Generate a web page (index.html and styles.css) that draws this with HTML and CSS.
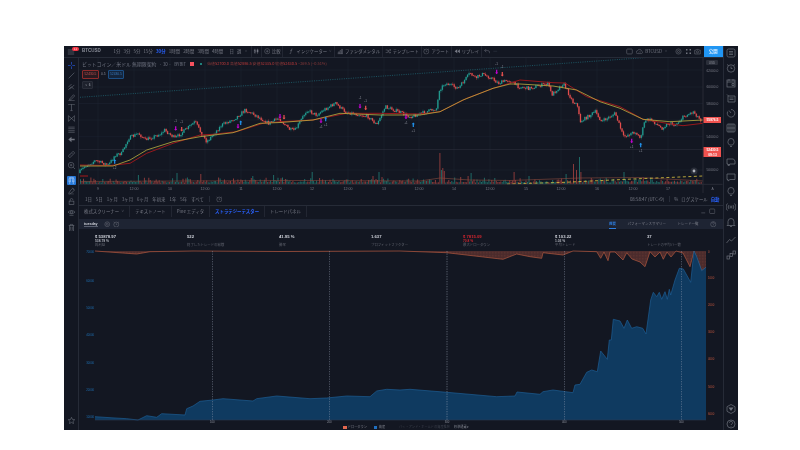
FILE: index.html
```html
<!DOCTYPE html>
<html lang="ja">
<head>
<meta charset="utf-8">
<title>BTCUSD</title>
<link rel="stylesheet" href="styles.css">
</head>
<body>
<svg class="sprite" aria-hidden="true">
  <symbol id="i-menu" viewBox="0 0 10 10"><path d="M1 2.5h8M1 5h8M1 7.500h8"/></symbol>
  <symbol id="i-cross" viewBox="0 0 10 10"><path d="M5 .5v3.500M5 6v3.500M.5 5H4M6 5h3.500"/></symbol>
  <symbol id="i-line" viewBox="0 0 10 10"><path d="M1.500 8.500l7-7"/></symbol>
  <symbol id="i-fork" viewBox="0 0 10 10"><path d="M1 6l4-4M3 8.500l5.500-5.500M1 9l4-4M5 5.500l3 3"/></symbol>
  <symbol id="i-brush" viewBox="0 0 10 10"><path d="M1 9h8M2.500 7l5-5.500 1.500 1.500-5 5H2.500z"/></symbol>
  <symbol id="i-text" viewBox="0 0 10 10"><path d="M1.500 2V1h7v1M5 1v8M3.500 9h3"/></symbol>
  <symbol id="i-pattern" viewBox="0 0 10 10"><path d="M1 1.500l8 7M1 8.500l8-7M1 1.500v7M9 1.500v7"/></symbol>
  <symbol id="i-bars" viewBox="0 0 10 10"><path d="M1 2h8M1 4h8M1 6.500h8M1 8.500h8"/></symbol>
  <symbol id="i-back" viewBox="0 0 10 10"><path class="solid" d="M1 5l4-3.500V4h4v2H5v2.500z"/></symbol>
  <symbol id="i-ruler" viewBox="0 0 10 10"><path d="M1 7l6-6 2 2-6 6zM3 5l1 1M5 3l1 1"/></symbol>
  <symbol id="i-zoom" viewBox="0 0 10 10"><circle cx="4.500" cy="4.500" r="3.500"/><path d="M7 7l2.500 2.500M3 4.500h3M4.500 3v3"/></symbol>
  <symbol id="i-magnet" viewBox="0 0 10 10"><path d="M2 3.500a3 3 0 0 1 6 0V7H6.500V3.500a1.500 1.500 0 0 0-3 0V7H2zM2 8.500h1.500M6.500 8.500H8"/></symbol>
  <symbol id="i-pen" viewBox="0 0 10 10"><path d="M1.500 8.500l3-4.500 2-1.500 2 2-1.500 2-4.500 3zM6 1.500l2.500 2.500M1 9.500h7"/></symbol>
  <symbol id="i-lock" viewBox="0 0 10 10"><rect x="2" y="4.500" width="6" height="4.500"/><path d="M3.300 4.500V3a1.700 1.700 0 0 1 3.400 0"/></symbol>
  <symbol id="i-eye" viewBox="0 0 10 10"><path d="M.5 4.500Q5 .5 9.500 4.500 5 8.500.5 4.500z"/><circle cx="5" cy="4.500" r="1.400"/><path d="M2.500 8.500h5"/></symbol>
  <symbol id="i-trash" viewBox="0 0 10 10"><path d="M1.500 2.500h7M3.500 2.500V1h3v1.500M2.500 2.500V9.500h5V2.500M4 4v4M6 4v4"/></symbol>
  <symbol id="i-star" viewBox="0 0 10 10"><path d="M5 1l1.200 2.700 2.900.3-2.200 2 .6 2.900L5 7.400 2.500 8.900l.6-2.900-2.200-2 2.900-.3z"/></symbol>
  <symbol id="i-list" viewBox="0 0 10 10"><rect x="1" y="1" width="8" height="8" rx="1.500"/><path d="M3 3.500h4M3 5h4M3 6.500h4"/></symbol>
  <symbol id="i-clock" viewBox="0 0 10 10"><circle cx="5" cy="5.500" r="3.700"/><path d="M5 3.500v2h1.500M1 1.500l1.500 1M9 1.500l-1.500 1"/></symbol>
  <symbol id="i-cal" viewBox="0 0 10 10"><rect x="1" y="2" width="8" height="7"/><path d="M1 4h8M3 1v2M7 1v2M6 5.500h2v2H6z"/></symbol>
  <symbol id="i-box" viewBox="0 0 10 10"><path d="M1 1.500l1.500 1.500M2 3h7v6H2zM3.500 5h4M3.500 6.500h4"/></symbol>
  <symbol id="i-timer" viewBox="0 0 10 10"><path d="M5 1.500a3.800 3.800 0 1 1-3.300 2M5 5L3 2.500"/></symbol>
  <symbol id="i-grid" viewBox="0 0 10 10"><rect x="1" y="1" width="8" height="8" rx="1"/><path d="M5 1v8M1 5h8M3 1v8M7 1v8"/></symbol>
  <symbol id="i-bulb" viewBox="0 0 10 10"><path d="M3.500 7C2 5.500 1.800 4.500 2 3.500a3 3 0 0 1 6 0C8.200 4.500 8 5.500 6.500 7zM4 8.500h2"/></symbol>
  <symbol id="i-chat" viewBox="0 0 10 10"><path d="M1 2h6.500l1.500 2v3H4L2 8.500V7H1z"/><circle cx="3" cy="8" r=".6"/></symbol>
  <symbol id="i-bubble" viewBox="0 0 10 10"><path d="M1 2h8v5.500H4L2 9V7.500H1z"/></symbol>
  <symbol id="i-wave" viewBox="0 0 10 10"><circle cx="5" cy="5" r="1"/><path d="M3 3a3 3 0 0 0 0 4M7 3a3 3 0 0 1 0 4M1.500 1.500a5 5 0 0 0 0 7M8.500 1.500a5 5 0 0 1 0 7"/></symbol>
  <symbol id="i-bell" viewBox="0 0 10 10"><path d="M2 7.500V4.500a3 3 0 0 1 6 0v3l1 1H1zM4 9.500h2"/></symbol>
  <symbol id="i-trend" viewBox="0 0 10 10"><path d="M.5 8l3-3.500 2 1.500 4-4"/></symbol>
  <symbol id="i-steps" viewBox="0 0 10 10"><rect x="1" y="6" width="2.500" height="3"/><rect x="4" y="3.500" width="2.500" height="3"/><rect x="7" y="1" width="2.500" height="3"/></symbol>
  <symbol id="i-hex" viewBox="0 0 10 10"><path d="M5 .5l4 2.200v4.600L5 9.500 1 7.300V2.700z"/><path class="solid" d="M2.500 3.500h5L5 7z"/></symbol>
  <symbol id="i-help" viewBox="0 0 10 10"><circle cx="5" cy="5" r="4"/><path d="M3.500 3.800a1.500 1.500 0 1 1 2 1.400L5 6M5 7v.6"/></symbol>
  <symbol id="i-candle" viewBox="0 0 10 10"><path d="M3 1v8M7 1v8"/><rect x="1.800" y="3" width="2.400" height="4"/><rect class="solid" x="5.800" y="2.500" width="2.400" height="4"/></symbol>
  <symbol id="i-plus" viewBox="0 0 10 10"><circle cx="5" cy="5" r="4"/><path d="M5 3v4M3 5h4"/></symbol>
  <symbol id="i-ind" viewBox="0 0 10 10"><path d="M7 1.500H5.500L4 8.500H2.500M3.300 4h3"/></symbol>
  <symbol id="i-fund" viewBox="0 0 10 10"><path d="M1 9h8M2 9V6h1.500v3M4.500 9V4H6v5M7 9V2h1.500v7"/></symbol>
  <symbol id="i-tmpl" viewBox="0 0 10 10"><path d="M1 3h3l2 4h3M1 7h3l2-4h3M7.500 1.500L9 3 7.500 4.500M7.500 5.500L9 7 7.500 8.500"/></symbol>
  <symbol id="i-alert" viewBox="0 0 10 10"><circle cx="5" cy="5.500" r="3.800"/><path d="M5 3.500v2h1.500M1 1.500l1.500 1M9 1.500l-1.500 1"/></symbol>
  <symbol id="i-replay" viewBox="0 0 10 10"><path class="solid" d="M5 2v6L1 5zM9 2v6L5.500 5z"/></symbol>
  <symbol id="i-undo" viewBox="0 0 10 10"><path d="M3.500 1.500L1 4l2.500 2.500M1 4h5a2.500 2.500 0 0 1 2.500 2.500V8"/></symbol>
  <symbol id="i-redo" viewBox="0 0 10 10"><path d="M2 5h6"/></symbol>
  <symbol id="i-square" viewBox="0 0 10 10"><rect x="1" y="1.500" width="8" height="7" rx="1.200"/></symbol>
  <symbol id="i-cloud" viewBox="0 0 10 10"><path d="M2.500 8a2 2 0 0 1-.3-4A3 3 0 0 1 8 4.500 1.800 1.800 0 0 1 7.800 8zM4 6.500l1.500-1.500 1 1"/></symbol>
  <symbol id="i-gear" viewBox="0 0 10 10"><circle cx="5" cy="5" r="1.500"/><circle cx="5" cy="5" r="3.700"/></symbol>
  <symbol id="i-full" viewBox="0 0 10 10"><path class="solid" d="M1.500 1.500h2v2h-2zM6.500 1.500h2v2h-2zM1.500 6.500h2v2h-2zM6.500 6.500h2v2h-2z"/></symbol>
  <symbol id="i-cam" viewBox="0 0 10 10"><path d="M1 3h2l.8-1h2.400l.8 1h2v5.500H1z"/><circle cx="5" cy="5.500" r="1.500"/></symbol>
  <symbol id="i-min" viewBox="0 0 10 10"><path d="M2 7.500h6"/></symbol>
</svg>

<div class="app">
  <div class="main">
    <header class="topbar">
      <div class="tb-seg tb-menu"><svg class="ico"><use href="#i-menu"/></svg><span class="badge">11</span></div>
      <div class="tb-seg tb-symbol">BTCUSD</div>
      <div class="tb-seg tb-frames">
        <span>1分</span><span>3分</span><span>5分</span><span>15分</span><span class="on">30分</span><span>1時間</span><span>2時間</span><span>3時間</span><span>4時間</span><span class="wide">日</span><span>週</span><span class="caret">∨</span>
      </div>
      <div class="tb-seg tb-ico"><svg class="ico"><use href="#i-candle"/></svg></div>
      <div class="tb-seg"><svg class="ico"><use href="#i-plus"/></svg><span>比較</span></div>
      <div class="tb-seg tb-wide"><svg class="ico"><use href="#i-ind"/></svg><span>インジケーター</span><span class="caret">∨</span></div>
      <div class="tb-seg"><svg class="ico"><use href="#i-fund"/></svg><span>ファンダメンタル</span></div>
      <div class="tb-seg"><svg class="ico"><use href="#i-tmpl"/></svg><span>テンプレート</span></div>
      <div class="tb-seg"><svg class="ico"><use href="#i-alert"/></svg><span>アラート</span></div>
      <div class="tb-seg"><svg class="ico"><use href="#i-replay"/></svg><span>リプレイ</span></div>
      <div class="tb-seg tb-last"><svg class="ico"><use href="#i-undo"/></svg><svg class="ico dim"><use href="#i-redo"/></svg></div>
      <div class="tb-right">
        <svg class="ico"><use href="#i-square"/></svg>
        <svg class="ico"><use href="#i-cloud"/></svg>
        <span>BTCUSD</span><span class="caret">∨</span>
        <svg class="ico gap-l"><use href="#i-gear"/></svg>
        <svg class="ico"><use href="#i-full"/></svg>
        <svg class="ico"><use href="#i-cam"/></svg>
      </div>
      <button class="publish">公開</button>
    </header>

    <div class="body">
      <aside class="left">
        <svg class="tool cross"><use href="#i-cross"/></svg>
        <svg class="tool"><use href="#i-line"/></svg>
        <svg class="tool"><use href="#i-fork"/></svg>
        <svg class="tool"><use href="#i-brush"/></svg>
        <svg class="tool"><use href="#i-text"/></svg>
        <svg class="tool"><use href="#i-pattern"/></svg>
        <svg class="tool"><use href="#i-bars"/></svg>
        <svg class="tool"><use href="#i-back"/></svg>
        <svg class="tool brk"><use href="#i-ruler"/></svg>
        <svg class="tool"><use href="#i-zoom"/></svg>
        <svg class="tool brk active"><use href="#i-magnet"/></svg>
        <svg class="tool"><use href="#i-pen"/></svg>
        <svg class="tool"><use href="#i-lock"/></svg>
        <svg class="tool"><use href="#i-eye"/></svg>
        <svg class="tool brk"><use href="#i-trash"/></svg>
        <svg class="tool tool-end"><use href="#i-star"/></svg>
      </aside>

      <div class="center">
        <section class="chart-pane">
          <svg class="price-svg" viewBox="79 58 643.500 135" id="priceChart">
            <g id="grid" class="grid"></g>
            <line class="pane-sep" x1="79" x2="703" y1="149.500" y2="149.500"/>
            <polyline class="trend" points="80,97.300 650,57.300"/>
            <g id="volume"></g>
            <path class="vol-ma" d="M80 181.500L180 181 300 180.500 420 181 440 178 470 180 510 180.500 580 178 640 177.500 703 181"/>
            <polyline class="vol-dash" points="507,184 560,182.500 633,179 703,176"/>
            <path class="ma-stub" d="M80 176h8"/>
            <g id="candles"></g>
            <polyline class="ma-red" points="80,165 110,165.500 130,163.300 146.700,153.300 173,143.300 200,135 213,134.300 236.700,131.700 263,123.300 280,121.700 313,120 346.700,113.300 380,113.300 420,114 440,111.700 466.700,98.300 493.300,88.300 520,80 553,82.700 565,83 586.700,96.700 620,106.700 643,119.300 666.700,123.300 683,125.700 703,123.300"/>
            <polyline class="ma-yel" points="80,166 113,166 130,160 146.700,150 173,141.700 200,136.700 233,132.700 260,123.300 280,122.500 313,120 340,113.300 380,115 420,115 440,111.700 463,100 493,88.300 510,84 520,84 553,86 576.700,90 600,101.700 620,108.300 643,119.300 670,121.700 703,120"/>
            <g id="markers"></g>
            <circle class="cam-bg" cx="694" cy="171" r="3.500"/>
            <circle class="cam-dot" cx="694" cy="171" r="1.400"/>
            <line class="axis" x1="79" x2="722.500" y1="184.300" y2="184.300"/>
            <line class="axis" x1="703" x2="703" y1="58" y2="193"/>
            <g id="timeLabels" class="time-labels"></g>
            <g class="price-labels">
              <rect class="usd-box" x="706" y="60" width="12" height="5" rx="1"/>
              <text class="usd" x="712" y="63.700">USD</text>
              <text x="712.500" y="71.500">62000.0</text>
              <text x="712.500" y="88.200">60000.0</text>
              <text x="712.500" y="104.500">58000.0</text>
              <text x="712.500" y="137.800">54000.0</text>
              <text x="712.500" y="171.200">50000.0</text>
              <rect class="last-box" x="703.500" y="117" width="17.500" height="6"/>
              <text class="last" x="712.500" y="121.300">55876.5</text>
              <rect class="last-box" x="703.500" y="147" width="17.500" height="10"/>
              <text class="last" x="712.500" y="151">52430.5</text>
              <text class="last" x="712.500" y="155.500">09:13</text>
              <text class="auto" x="712.500" y="189.500">A</text>
            </g>
          </svg>
          <div class="legend">
            <div class="legend-title">
              <span class="name">ビットコイン／米ドル 無期限契約</span><span>· 30 ·</span><span>BYBIT</span><i class="flag"></i><i class="dot"></i>
              <span class="ohlc">始値<b>52700.0</b> 高値<b>52886.5</b> 安値<b>52335.0</b> 終値<b>52430.5</b> −269.5 (−0.51%)</span>
            </div>
            <div class="legend-trade"><span class="sell">52430.5</span><span class="spread">0.5</span><span class="buy">52430.5</span></div>
            <div class="legend-more">∨ 6</div>
          </div>
        </section>

        <div class="range">
          <span>1日</span><span>5日</span><span>1ヶ月</span><span>3ヶ月</span><span>6ヶ月</span><span>年初来</span><span>1年</span><span>5年</span><span>すべて</span>
          <i class="vbar"></i><svg class="ico"><use href="#i-alert"/></svg>
          <div class="range-right"><span>08:58:47 (UTC+9)</span><i class="vbar"></i><span>%</span><span>ログスケール</span><span class="on">自動</span></div>
        </div>

        <nav class="tabs">
          <span class="tab">株式スクリーナー<em>∨</em></span>
          <span class="tab">テキストノート</span>
          <span class="tab">Pine エディタ</span>
          <span class="tab on">ストラテジーテスター</span>
          <span class="tab">トレードパネル</span>
          <div class="tabs-right"><svg class="ico"><use href="#i-min"/></svg><svg class="ico"><use href="#i-square"/></svg></div>
        </nav>

        <div class="strategy">
          <span class="strat-name">tuesday</span>
          <svg class="ico"><use href="#i-gear"/></svg>
          <svg class="ico"><use href="#i-alert"/></svg>
          <div class="strat-right"><span class="on">概要</span><span>パフォーマンスサマリー</span><span>トレード一覧</span><svg class="ico"><use href="#i-help"/></svg></div>
        </div>

        <div class="stats">
          <div class="stat"><b>$ 53878.97</b><small>538.79 %</small><span>純利益</span></div>
          <div class="stat"><b>522</b><small></small><span>終了したトレードの総数</span></div>
          <div class="stat"><b>41.95 %</b><small></small><span>勝率</span></div>
          <div class="stat"><b>1.637</b><small></small><span>プロフィットファクター</span></div>
          <div class="stat neg"><b>$ 7815.09</b><small>70.8 %</small><span>最大ドローダウン</span></div>
          <div class="stat"><b>$ 103.22</b><small>1.03 %</small><span>平均トレード</span></div>
          <div class="stat"><b>37</b><small></small><span>トレードの平均バー数</span></div>
        </div>

        <svg class="equity-svg" viewBox="79 250 643.500 174">
          <defs>
            <pattern id="hatch" width="1.500" height="1.500" patternUnits="userSpaceOnUse"><rect width="1.500" height="1.500" fill="#4a2b2c"/><rect width=".6" height=".6" fill="#6a3a34"/></pattern>
          </defs>
          <path class="dd-fill" d="M95 251L136.700 254 150 251.700 193 251 280 251.500 400 251 446.700 252.700 503 259.300 516.700 254 530 256.700 541.700 258.300 543 252.700 563 255 573 251 596.700 251.700 600.700 258.300 604 252 608 260.700 610 252 615 252 623 260 626.700 252.700 632 259 640 262 645 266.700 650 251.700 655 257 660 252 663.300 259.300 667 252 671 257 676 251 683 253 690 266.700 694 251 701.700 270.700 706 267.300V251z"/>
          <path class="dd-line" d="M95 251L136.700 254 150 251.700 193 251 280 251.500 400 251 446.700 252.700 503 259.300 516.700 254 530 256.700 541.700 258.300 543 252.700 563 255 573 251 596.700 251.700 600.700 258.300 604 252 608 260.700 610 252 615 252 623 260 626.700 252.700 632 259 640 262 645 266.700 650 251.700 655 257 660 252 663.300 259.300 667 252 671 257 676 251 683 253 690 266.700 694 251 701.700 270.700 706 267.300"/>
          <path class="eq-fill" d="M95 416.700L110 417.700 126.700 418.700 138 420 146.700 415.700 156.700 417.300 161.700 413.700 185 415 186.700 408.700 193 406 200 401.300 213 400 223 398.700 253 401 256.700 398.700 276.700 396 293 397.300 310 398.700 326.700 398 346.700 396 370 396.700 376.700 391 386.700 389.300 400 390 410 389.300 446.700 392.300 496.700 396.700 515 396 517 392 540 394.300 543 391.700 553 390 573 392.700 575 385 580 384.300 586.700 372.300 591.700 370 597.300 371.700 600.700 351 607.300 359.300 609.300 340 611.300 340 613.300 319.300 620 321 624 328.300 627.300 320 631.700 328.300 636.700 326.700 642.700 328.300 646 334 650.700 300 653.300 292.300 656.700 296.700 659.300 292.300 661.700 299.300 665 291.700 667.300 299.300 669.300 289.300 670.700 295 675 280 679.300 268.300 683.300 269 690.700 282.300 694 251 696.700 256.700 701.700 270.700 706 267.300V420H95z"/>
          <path class="eq-line" d="M95 416.700L110 417.700 126.700 418.700 138 420 146.700 415.700 156.700 417.300 161.700 413.700 185 415 186.700 408.700 193 406 200 401.300 213 400 223 398.700 253 401 256.700 398.700 276.700 396 293 397.300 310 398.700 326.700 398 346.700 396 370 396.700 376.700 391 386.700 389.300 400 390 410 389.300 446.700 392.300 496.700 396.700 515 396 517 392 540 394.300 543 391.700 553 390 573 392.700 575 385 580 384.300 586.700 372.300 591.700 370 597.300 371.700 600.700 351 607.300 359.300 609.300 340 611.300 340 613.300 319.300 620 321 624 328.300 627.300 320 631.700 328.300 636.700 326.700 642.700 328.300 646 334 650.700 300 653.300 292.300 656.700 296.700 659.300 292.300 661.700 299.300 665 291.700 667.300 299.300 669.300 289.300 670.700 295 675 280 679.300 268.300 683.300 269 690.700 282.300 694 251 696.700 256.700 701.700 270.700 706 267.300"/>
          <line class="eq-base" x1="95" x2="706" y1="420" y2="420"/>
          <g class="eq-v">
            <line x1="212.300" x2="212.300" y1="251" y2="420"/>
            <line x1="329.300" x2="329.300" y1="251" y2="420"/>
            <line x1="447" x2="447" y1="251" y2="420"/>
            <line x1="564.300" x2="564.300" y1="251" y2="420"/>
            <line x1="681.300" x2="681.300" y1="251" y2="420"/>
          </g>
          <g class="eq-x">
            <text x="212.300" y="423.200">100</text><text x="329.300" y="423.200">200</text><text x="447" y="423.200">300</text><text x="564.300" y="423.200">400</text><text x="681.300" y="423.200">500</text>
          </g>
          <g class="eq-left">
            <text x="94" y="253">70000</text><text x="94" y="282">60000</text><text x="94" y="309">50000</text><text x="94" y="336">40000</text><text x="94" y="363.700">30000</text><text x="94" y="390.700">20000</text><text x="94" y="417.700">10000</text>
          </g>
          <g class="eq-right">
            <text x="708" y="253">0</text><text x="708" y="279">1000</text><text x="708" y="306">2000</text><text x="708" y="333">3000</text><text x="708" y="360">4000</text><text x="708" y="388">5000</text><text x="708" y="415">6000</text>
          </g>
        </svg>

        <div class="eq-legend">
          <i class="sw sw-dd"></i><span>ドローダウン</span>
          <i class="sw sw-eq"></i><span>資産</span>
          <span class="faint">バイ・アンド・ホールドの資産推移</span>
          <span class="unit">標準通貨 ▾</span>
        </div>
      </div>
    </div>
  </div>

  <aside class="right">
    <svg class="rtool"><use href="#i-list"/></svg>
    <svg class="rtool"><use href="#i-clock"/></svg>
    <svg class="rtool"><use href="#i-cal"/></svg>
    <svg class="rtool"><use href="#i-box"/></svg>
    <svg class="rtool"><use href="#i-timer"/></svg>
    <svg class="rtool"><use href="#i-grid"/></svg>
    <svg class="rtool"><use href="#i-bulb"/></svg>
    <svg class="rtool rbrk"><use href="#i-chat"/></svg>
    <svg class="rtool"><use href="#i-bubble"/></svg>
    <svg class="rtool"><use href="#i-bulb"/></svg>
    <svg class="rtool"><use href="#i-wave"/></svg>
    <svg class="rtool"><use href="#i-bell"/></svg>
    <svg class="rtool rbrk2"><use href="#i-trend"/></svg>
    <svg class="rtool"><use href="#i-steps"/></svg>
    <svg class="rtool rend"><use href="#i-hex"/></svg>
    <svg class="rtool"><use href="#i-help"/></svg>
  </aside>
</div>
<script src="chart.js"></script>
</body>
</html>
```
FILE: styles.css
```css
* { box-sizing: border-box; }
html, body { margin: 0; padding: 0; background: #fff; }
body { width: 800px; height: 450px; overflow: hidden; padding: 46px 0 0 64px; font-family: "Noto Sans CJK JP", "Noto Sans", sans-serif; }
.sprite { display: none; }
.sprite path, .sprite circle, .sprite rect { fill: none; stroke: currentColor; stroke-width: .7; }
.sprite .solid { fill: currentColor; stroke: none; }

.app { width: 674px; height: 384px; display: flex; background: #131722; color: #787b86; font-size: 4.4px; line-height: 1; filter: blur(.3px); overflow: hidden; }
.main { flex: 1; min-width: 0; display: flex; flex-direction: column; }
.ico { width: 6.5px; height: 6.5px; flex: none; color: #787b86; display: block; }
.ico.dim { color: #3a3f4d; }

/* top bar */
.topbar { height: 12px; flex: none; display: flex; align-items: center; border-bottom: 1px solid #262b37; position: relative; }
.tb-seg { height: 100%; display: flex; align-items: center; gap: 1.500px; padding: 0 1.800px; border-right: 1px solid #222632; white-space: nowrap; }
.tb-wide { padding: 0 2.500px 0 5px; }
.tb-menu { width: 14.500px; padding: 0 0 0 2.500px; position: relative; border-right: 0; }
.tb-menu .ico { width: 8px; height: 8px; }
.badge { position: absolute; left: 8px; top: .5px; width: 7px; height: 4.500px; border-radius: 2.500px; background: #f23645; color: #fff; font-size: 2.500px; text-align: center; line-height: 4.500px; }
.tb-symbol { width: 33.500px; padding: 0 0 0 3.500px; color: #8a8e99; font-family: "Liberation Sans", sans-serif; font-weight: 700; font-size: 4.500px; border-right: 0; }
.tb-frames { gap: 3.200px; padding: 0 3px 0 1.500px; }
.tb-frames .on { color: #2962ff; font-weight: 700; }
.tb-frames .wide { margin-left: 3px; }
.caret { font-size: 3px; color: #5d606b; }
.tb-ico { padding: 0 1.500px; }
.tb-last { border-right: 0; }
.tb-right { margin-left: auto; display: flex; align-items: center; gap: 2.500px; padding-right: 3px; white-space: nowrap; }
.tb-right .ico { width: 7px; height: 7px; }
.gap-l { margin-left: 5px; }
.publish { width: 18.500px; height: 12px; margin: -1px 0 0 0; flex: none; border: 0; padding: 0; background: #2196f3; color: #dceeff; font: 700 4.400px "Noto Sans CJK JP", sans-serif; align-self: flex-start; }

/* left tools */
.body { flex: 1; min-height: 0; display: flex; }
.left { width: 15px; flex: none; display: flex; flex-direction: column; align-items: center; gap: 1.700px; padding: 2.500px 0 5.500px; border-right: 1px solid #262b37; }
.tool { width: 9px; height: 9px; flex: none; color: #70747f; padding: .5px; }
.tool.cross { color: #2962ff; }
.brk { margin-top: 4.200px; }
.tool.active { color: #d8e9ff; background: #2678d8; border-radius: 1px; }
.tool-end { margin-top: auto; }

.center { flex: 1; min-width: 0; display: flex; flex-direction: column; position: relative; }

/* price chart */
.chart-pane { height: 135px; flex: none; position: relative; }
.price-svg { display: block; width: 643.500px; height: 135px; }
.grid line { stroke: #1c2130; stroke-width: .6; }
.pane-sep { stroke: #2b2e3a; stroke-width: .6; }
.trend { fill: none; stroke: #1f6f7c; stroke-width: .7; stroke-dasharray: 1 1.300; }
.vol-ma { fill: none; stroke: #8a4a3c; stroke-width: .6; }
.vol-dash { fill: none; stroke: #e0c640; stroke-width: .8; stroke-dasharray: 3 2.500; }
.ma-stub { stroke: #b71c1c; stroke-width: .9; fill: none; }
.ma-red { fill: none; stroke: #97181c; stroke-width: 1; stroke-linejoin: round; }
.ma-yel { fill: none; stroke: #bcae40; stroke-width: .8; stroke-linejoin: round; }
.cam-bg { fill: #2a2e39; }
.cam-dot { fill: #b2b5be; }
.axis { stroke: #2a2e39; stroke-width: .9; }
.time-labels text { font: 3.600px "Liberation Sans", sans-serif; fill: #787b86; text-anchor: middle; }
.price-labels text { font: 3.300px "Liberation Sans", sans-serif; fill: #787b86; text-anchor: middle; }
.usd-box { fill: #2a2e39; }
.price-labels .usd { fill: #8a8e99; font-size: 3px; }
.last-box { fill: #f0524f; }
.price-labels .last { fill: #fff; font-weight: 700; }
.price-labels .auto { fill: #787b86; }
.marker-label { font: 3px "Liberation Sans", sans-serif; fill: #8b8f9b; text-anchor: middle; }

.legend { position: absolute; left: 3px; top: 2.500px; display: flex; flex-direction: column; align-items: flex-start; }
.legend-title { display: flex; align-items: center; gap: 3px; height: 7px; color: #6f7380; white-space: nowrap; font-size: 4.400px; }
.legend-title .name { font-size: 4.900px; }
.flag { width: 3.500px; height: 3.500px; background: #f7525f; margin: 0 3px 0 1px; }
.dot { width: 2.500px; height: 2.500px; border-radius: 50%; background: #26a69a; margin-right: 2px; }
.ohlc { font-size: 3.900px; color: #8b3a3a; }
.ohlc b { color: #c23a3a; font-weight: 400; }
.legend-trade { display: flex; align-items: center; margin-top: 2.500px; font: 3.300px "Liberation Sans", sans-serif; }
.sell { border: .6px solid #8e2c2c; color: #c15252; border-radius: 1px; padding: 1.300px 1.500px; background: #2a1a20; }
.buy { border: .6px solid #1c4f85; color: #3a78b8; border-radius: 1px; padding: 1.300px 1.500px; background: #14253c; }
.spread { padding: 0 2px; color: #8a8e99; }
.legend-more { margin-top: 2px; padding: 1px 1.800px; background: #1e222d; border: .5px solid #2a2e39; font: 3px "Liberation Sans", sans-serif; color: #b2b5be; border-radius: 1px; }

/* range bar */
.range { height: 12px; flex: none; display: flex; align-items: center; gap: 4px; padding-left: 6px; white-space: nowrap; }
.vbar { width: 1px; height: 6px; background: #262b37; display: block; margin: 0 1.500px; }
.range-right { margin-left: auto; display: flex; align-items: center; gap: 3px; padding-right: 3px; }
.range-right .on { color: #2962ff; font-weight: 700; }

/* tabs */
.tabs { height: 12px; flex: none; display: flex; border-top: 1px solid #262b37; white-space: nowrap; }
.tab { display: flex; align-items: center; padding: 0 5px; border-right: 1px solid #222632; }
.tab em { font-style: normal; font-size: 3px; margin-left: 2px; }
.tab.on { color: #2962ff; font-weight: 700; }
.tabs-right { margin-left: auto; display: flex; align-items: center; gap: 3px; padding-right: 7px; }

/* strategy */
.strategy { height: 10px; margin-top: 2px; flex: none; display: flex; align-items: center; gap: 3px; padding-left: 5px; background: #1e2433; }
.strat-name { color: #d1d4dc; font: 700 3.600px "Liberation Sans", sans-serif; margin-right: 3px; border-bottom: .5px solid #5a6070; }
.strat-right { margin-left: auto; display: flex; align-items: center; gap: 11.500px; padding-right: 6px; align-self: stretch; font-size: 3.500px; }
.strat-right span { display: flex; align-items: center; height: 100%; }
.strat-right .on { color: #2e7ee0; font-weight: 700; border-bottom: 1px solid #2e7ee0; }

/* stats */
.stats { height: 21px; flex: none; display: grid; grid-template-columns: repeat(7, 92px); padding: 4.500px 0 0 16px; }
.stat { display: flex; flex-direction: column; white-space: nowrap; }
.stat b { height: 5px; color: #d1d4dc; font: 700 4.200px "Liberation Sans", sans-serif; }
.stat small { height: 4.300px; color: #b2b5be; font: 700 3.300px "Liberation Sans", sans-serif; }
.stat span { font-size: 3.400px; color: #5d606b; }
.stat.neg b, .stat.neg small { color: #d5262f; }

/* equity */
.equity-svg { display: block; width: 643.500px; height: 174px; flex: none; }
.dd-fill { fill: url(#hatch); }
.dd-line { fill: none; stroke: #b0583f; stroke-width: .7; }
.eq-fill { fill: #0f3a60; }
.eq-line { fill: none; stroke: #1c5d93; stroke-width: .7; }
.eq-base { stroke: #2b3a52; stroke-width: .6; }
.eq-v line { stroke: #98a1b3; stroke-width: .6; stroke-dasharray: 1.300 1.200; opacity: .85; }
.eq-x text { font: 2.800px "Liberation Sans", sans-serif; fill: #8a8e99; text-anchor: middle; }
.eq-left text { font: 2.800px "Liberation Sans", sans-serif; fill: #1f6eb0; text-anchor: end; }
.eq-right text { font: 2.800px "Liberation Sans", sans-serif; fill: #c0573f; }

.eq-legend { height: 6px; flex: none; display: flex; align-items: center; padding-left: 264px; font-size: 3.200px; white-space: nowrap; }
.sw { width: 3.500px; height: 3px; display: block; margin-right: 1.300px; }
.sw-dd { background: #e2674f; }
.sw-eq { background: #1f6fc0; margin-left: 7px; }
.faint { color: #3c404c; margin-left: 14px; }
.unit { color: #8a8e99; margin-left: 4px; }

/* right tools */
.right { width: 15.500px; flex: none; display: flex; flex-direction: column; align-items: center; gap: 5px; padding: 2px 0 1px; border-left: 1.500px solid #262b37; }
.rtool { width: 10px; height: 10px; flex: none; color: #6e727d; }
.rbrk { margin-top: 4px; }
.rbrk2 { margin-top: 3px; }
.rend { margin-top: auto; }
```
FILE: chart.js
```js
(function () {
  var NS = 'http://www.w3.org/2000/svg';
  var keys = [[80,173],[86.7,166],[96.7,160.7],[110,165],[116.7,155],[123.3,153.3],[130,138.3],[140,133.3],[146.7,140],[163.3,133.3],[166,130],[176.7,138.3],[196.7,121.7],[202.7,133.3],[208.3,141.7],[223.3,125],[236.7,118.3],[246.7,110],[256.7,115],[270,123.3],[280,118.3],[291.7,130],[296.7,130],[308.3,110],[318.3,115],[325,110],[336.7,103.3],[346.7,111.7],[370,116.7],[378.3,125],[386.7,106.7],[400,111.7],[411.7,116.7],[423.3,113.3],[438.3,108.3],[440.7,90],[446.7,83.3],[460,88.3],[471.7,72.7],[476.7,78.3],[483.3,74],[493.3,78.3],[500,83.3],[510,80],[520,86.7],[530,88.3],[550,83.3],[553,95],[565,83.3],[575,103.3],[578,101.7],[581.7,121.7],[596.7,111.7],[603.3,121.7],[616.7,113.3],[625,136.7],[636.7,131.7],[641.7,138.3],[646.7,120],[653,120],[663,128.3],[670,123.3],[676.7,125],[685,116.7],[695,111.7],[702,120]];
  var seed = 7;
  function rnd() { seed = (seed * 16807) % 2147483647; return seed / 2147483647; }
  function priceAt(x) {
    for (var i = 1; i < keys.length; i++) {
      if (x <= keys[i][0]) {
        var a = keys[i - 1], b = keys[i];
        return a[1] + (b[1] - a[1]) * (x - a[0]) / (b[0] - a[0]);
      }
    }
    return keys[keys.length - 1][1];
  }
  function el(name, attrs, parent, text) {
    var e = document.createElementNS(NS, name);
    for (var k in attrs) e.setAttribute(k, attrs[k]);
    if (text) e.textContent = text;
    parent.appendChild(e);
    return e;
  }

  /* grid + time axis */
  var times = [[98,'9'],[134,'12:00'],[170,'10'],[205,'12:00'],[241,'11'],[277,'12:00'],[312,'12'],[348,'12:00'],[384,'13'],[419,'12:00'],[454,'14'],[490,'12:00'],[526,'15'],[561,'12:00'],[597,'16'],[633,'12:00'],[668,'17']];
  var grid = document.getElementById('grid');
  var tl = document.getElementById('timeLabels');
  times.forEach(function (t) {
    el('line', { x1: t[0], x2: t[0], y1: 58, y2: 184 }, grid);
    el('text', { x: t[0], y: 189.5 }, tl, t[1]);
  });
  [70, 87, 103.5, 120, 136.7, 170].forEach(function (y) {
    el('line', { x1: 79, x2: 703, y1: y, y2: y }, grid);
  });

  /* candles */
  var up = '', down = '', prev = priceAt(80), step = 1.485;
  for (var x = 80; x < 702; x += step) {
    var close = priceAt(x + step) + (rnd() - 0.5) * 3.4;
    var top = Math.min(prev, close), bot = Math.max(prev, close);
    var hi = top - rnd() * 1.8, lo = bot + rnd() * 2;
    var h = Math.max(bot - top, 0.6);
    var s = 'M' + x.toFixed(1) + ' ' + hi.toFixed(1) + 'V' + lo.toFixed(1) +
      'M' + (x - 0.45).toFixed(2) + ' ' + top.toFixed(1) + 'h.9v' + h.toFixed(1) + 'h-.9z';
    if (close < prev) up += s; else down += s;
    prev = close;
  }
  var cg = document.getElementById('candles');
  el('path', { d: up, fill: '#26a69a', stroke: '#26a69a', 'stroke-width': 0.3 }, cg);
  el('path', { d: down, fill: '#ef5350', stroke: '#ef5350', 'stroke-width': 0.3 }, cg);

  /* volume */
  var spikes = { 439: 153, 441: 170, 442.5: 168, 444: 171, 573: 164, 579: 157, 513: 172, 624: 172, 581: 172, 138: 175, 176: 173, 200: 174, 273: 175, 312: 172, 372: 176, 378: 172, 252: 176, 468: 176, 470: 173, 528: 176, 566: 174, 576: 170 };
  var volG = { u: '', d: '' }, i = 0;
  for (var vx = 80; vx < 702; vx += step) {
    var vy = 184 - (1.5 + rnd() * rnd() * 6);
    Object.keys(spikes).forEach(function (k) { if (Math.abs(k - vx) < 0.75) vy = spikes[k]; });
    var seg = 'M' + vx.toFixed(1) + ' 184V' + vy.toFixed(1) + 'h1V184z';
    if (rnd() > 0.5) volG.u += seg; else volG.d += seg;
    i++;
  }
  var vg = document.getElementById('volume');
  el('path', { d: volG.u, fill: '#1f6a66' }, vg);
  el('path', { d: volG.d, fill: '#8a3a3a' }, vg);

  /* trade markers: x, y, colour, direction, label, label y */
  var marks = [
    [114.7,161.7,'#2196f3',1,'+2',168],[175.7,128.3,'#c800d8',0,'-1',121],[181.7,129,'#ef5350',0,'-1',122],
    [238,126,'#c800d8',0,'',0],[240.7,123,'#2196f3',1,'',0],[280,116,'#c800d8',0,'',0],[284,117,'#ef5350',0,'',0],
    [321,120.7,'#c800d8',0,'+1',126.7],[325.7,119.3,'#2196f3',1,'+1',125.3],[360,106,'#c800d8',0,'-1',98.3],
    [365.7,107.7,'#ef5350',0,'-1',101],[406,116.7,'#c800d8',0,'+1',123.3],[413.3,125,'#2196f3',1,'+1',130.7],
    [496.7,71.7,'#c800d8',0,'-1',64.3],[502.3,74,'#ef5350',0,'-1',66.7],[631.7,140.7,'#c800d8',0,'+1',147.3],[640.7,145.3,'#2196f3',1,'+1',151]
  ];
  var mg = document.getElementById('markers');
  marks.forEach(function (m) {
    var x = m[0], y = m[1], p;
    if (m[3]) p = [[x,y-2.5],[x+1.6,y-0.7],[x+0.6,y-0.7],[x+0.6,y+2],[x-0.6,y+2],[x-0.6,y-0.7],[x-1.6,y-0.7]];
    else p = [[x,y+2.5],[x+1.6,y+0.7],[x+0.6,y+0.7],[x+0.6,y-2],[x-0.6,y-2],[x-0.6,y+0.7],[x-1.6,y+0.7]];
    el('polygon', { points: p.join(' '), fill: m[2] }, mg);
    if (m[4]) el('text', { x: x, y: m[5] + 1, 'class': 'marker-label' }, mg, m[4]);
  });
})();
```
